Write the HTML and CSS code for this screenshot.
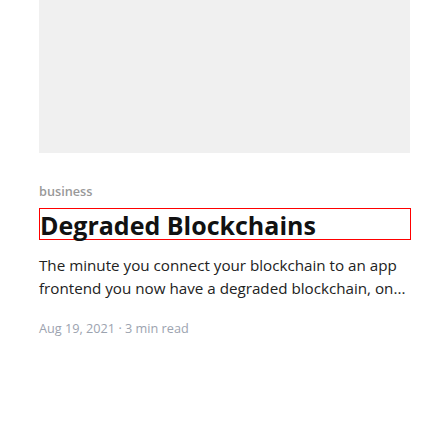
FILE: index.html
```
<!DOCTYPE html>
<html>
<head>
<meta charset="utf-8">
<link rel="stylesheet" href="styles.css">
</head>
<body>
<article class="card">
  <div class="cover"></div>
  <div class="tag">business</div>
  <h2 class="title">Degraded Blockchains</h2>
  <p class="excerpt">The minute you connect your blockchain to an app frontend you now have a degraded blockchain, on...</p>
  <div class="meta">Aug 19, 2021 · 3 min read</div>
</article>
</body>
</html>
```
FILE: styles.css
```
html, body {
  margin: 0;
  padding: 0;
  background: #fff;
}
body {
  font-family: "Open Sans", "Noto Sans", sans-serif;
}
.card {
  margin-left: 39px;
  width: 372px;
}
.cover {
  width: 371px;
  height: 153px;
  background: #f0f0f0;
}
.tag {
  margin-top: 29px;
  font-size: 12.7px;
  line-height: 18px;
  font-weight: 600;
  color: #999999;
}
.title {
  margin: 8px 0 0;
  padding-top: 2px;
  border: 1px solid #f00;
  font-size: 25px;
  line-height: 28px;
  font-weight: 700;
  color: #111111;
}
.excerpt {
  margin: 14px 0 0;
  font-size: 15.2px;
  line-height: 23px;
  color: #222222;
}
.meta {
  margin-top: 19px;
  font-size: 12.7px;
  line-height: 18px;
  color: #9ca3af;
}
```
